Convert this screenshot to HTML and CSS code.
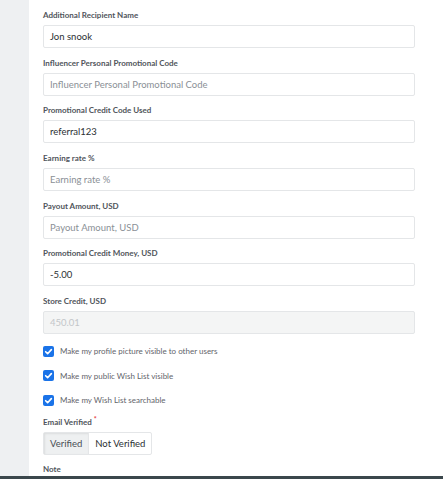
FILE: index.html
```html
<!DOCTYPE html>
<html>
<head>
<meta charset="utf-8">
<link rel="stylesheet" href="styles.css">
</head>
<body>
<div class="page">
  <aside class="rail"></aside>
  <main class="panel">
    <div class="field">
      <label class="lbl">Additional Recipient Name</label>
      <div class="input">Jon snook</div>
    </div>
    <div class="field">
      <label class="lbl">Influencer Personal Promotional Code</label>
      <div class="input ph">Influencer Personal Promotional Code</div>
    </div>
    <div class="field">
      <label class="lbl">Promotional Credit Code Used</label>
      <div class="input">referral123</div>
    </div>
    <div class="field">
      <label class="lbl">Earning rate %</label>
      <div class="input ph">Earning rate %</div>
    </div>
    <div class="field">
      <label class="lbl">Payout Amount, USD</label>
      <div class="input ph">Payout Amount, USD</div>
    </div>
    <div class="field">
      <label class="lbl">Promotional Credit Money, USD</label>
      <div class="input">-5.00</div>
    </div>
    <div class="field">
      <label class="lbl">Store Credit, USD</label>
      <div class="input disabled">450.01</div>
    </div>
    <div class="checks">
      <div class="check"><span class="box"><svg viewBox="0 0 10 10"><path d="M2.4 5.2 L4.2 7 L7.6 3.3" fill="none" stroke="#fff" stroke-width="1.5" stroke-linecap="round" stroke-linejoin="round"/></svg></span><span>Make my profile picture visible to other users</span></div>
      <div class="check"><span class="box"><svg viewBox="0 0 10 10"><path d="M2.4 5.2 L4.2 7 L7.6 3.3" fill="none" stroke="#fff" stroke-width="1.5" stroke-linecap="round" stroke-linejoin="round"/></svg></span><span>Make my public Wish List visible</span></div>
      <div class="check"><span class="box"><svg viewBox="0 0 10 10"><path d="M2.4 5.2 L4.2 7 L7.6 3.3" fill="none" stroke="#fff" stroke-width="1.5" stroke-linecap="round" stroke-linejoin="round"/></svg></span><span>Make my Wish List searchable</span></div>
    </div>
    <div class="field">
      <label class="lbl">Email Verified <sup class="req">*</sup></label>
      <div class="seg">
        <span class="seg-btn active">Verified</span>
        <span class="seg-btn">Not Verified</span>
      </div>
    </div>
    <div class="field note">
      <label class="lbl">Note</label>
    </div>
  </main>
</div>
<div class="bottom-bar"></div>
</body>
</html>
```
FILE: styles.css
```css
html, body {
  margin: 0;
  padding: 0;
  height: 479px;
  overflow: hidden;
  background: #ffffff;
  font-family: "Lato", "Open Sans", sans-serif;
}
.page {
  display: flex;
  height: 476px;
  overflow: hidden;
}
.rail {
  width: 29px;
  flex: none;
  background: #eef0f2;
}
.panel {
  flex: 1;
  padding: 9px 28px 0 14px;
  background: #fff;
}
.field {
  display: flex;
  flex-direction: column;
  margin-bottom: 8.67px;
}
.lbl {
  font-size: 8px;
  font-weight: 700;
  color: #50555b;
  line-height: 12px;
  height: 12px;
  margin-bottom: 4px;
}
.req {
  color: #e53935;
  font-size: 7px;
  line-height: 0;
  vertical-align: 3px;
}
.input {
  box-sizing: border-box;
  height: 23px;
  border: 1px solid #e4e6e8;
  border-radius: 2px;
  padding: 0 6px;
  font-size: 9.5px;
  line-height: 21px;
  color: #2b2f33;
}
.input.ph {
  color: #8a9096;
}
.input.disabled {
  background: #f4f5f5;
  color: #c3c6c9;
}
.checks {
  display: flex;
  flex-direction: column;
  gap: 13.5px;
  padding-top: 3px;
  margin-bottom: 10px;
}
.check {
  display: flex;
  align-items: center;
  gap: 6px;
  font-size: 8px;
  color: #5f646a;
  height: 11px;
}
.box {
  width: 11px;
  height: 11px;
  border-radius: 2px;
  background: #1a73e8;
  display: flex;
}
.box svg {
  width: 11px;
  height: 11px;
}
.seg {
  display: flex;
  align-self: flex-start;
  height: 23px;
  box-sizing: border-box;
  border: 1px solid #e4e6e8;
  border-radius: 2px;
  font-size: 9.5px;
  color: #2b2f33;
}
.seg-btn {
  padding: 0 6px;
  line-height: 21px;
}
.seg-btn.active {
  background: #eef0f1;
  box-shadow: inset 1px 1px 2px rgba(0,0,0,0.08);
  border-right: 1px solid #e4e6e8;
  color: #4a4f55;
}
.note {
  margin-top: 1px;
}
.bottom-bar {
  height: 3px;
  background: #3b474c;
}
```
